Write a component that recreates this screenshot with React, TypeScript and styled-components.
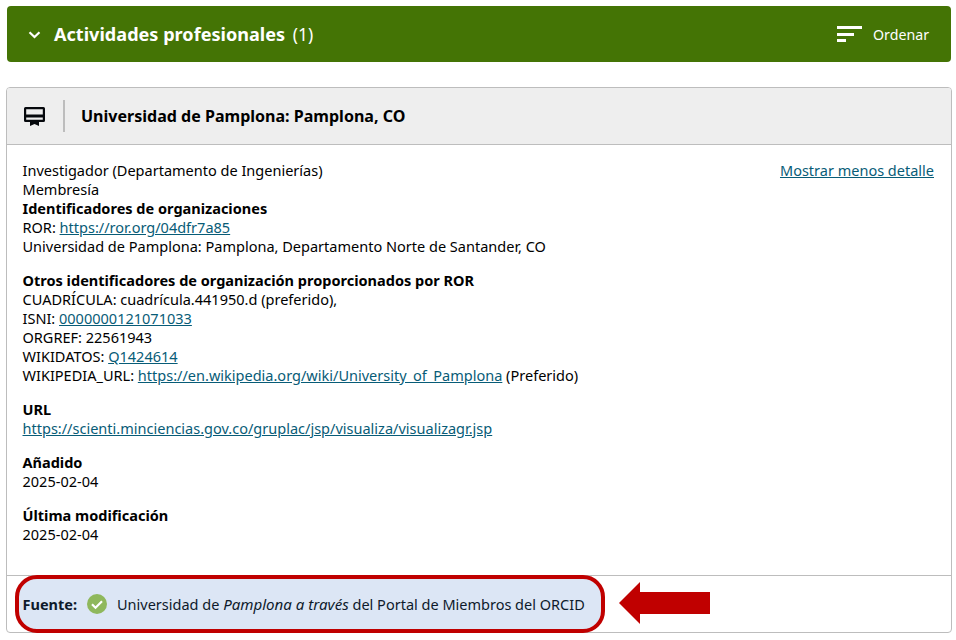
import React from "react";
import styled, { createGlobalStyle } from "styled-components";

const Global = createGlobalStyle`
  html, body { margin: 0; padding: 0; background: #fff; }
  body { font-family: "Noto Sans", "Open Sans", sans-serif; font-size: 14.53px; line-height: 19px; color: #000; }
`;
const Page = styled.div`
  width: 956px; height: 640px; overflow: hidden; box-sizing: border-box;
  padding: 6px 5px 0 7px;
  display: flex; flex-direction: column; gap: 25px;
`;
const Banner = styled.header`
  height: 56px; background: #447405; border-radius: 4px; color: #fff;
  display: flex; align-items: center; padding: 0 22px 0 20px;
`;
const Title = styled.h2`
  margin: 0 0 0 12px; font-size: 18.1px; font-weight: 700; line-height: 24px; flex: 1;
  span { font-weight: 400; font-size: 17.4px; margin-left: 3px; }
`;
const Sort = styled.div`display: flex; align-items: center; gap: 11px; font-size: 14.2px;`;
const Card = styled.section`
  position: relative; width: 946px; height: 546px; margin-left: -1px; box-sizing: border-box;
  border: 1px solid #bdbdbd; border-radius: 4px; display: flex; flex-direction: column;
`;
const CardHead = styled.div`
  height: 57px; flex: none; box-sizing: border-box; background: #eee; border-bottom: 1px solid #bdbdbd;
  border-radius: 3px 3px 0 0; display: flex; align-items: center; padding-left: 17px;
`;
const Divider = styled.div`width: 2px; height: 32px; background: #bdbdbd; margin: 0 16px 0 18px;`;
const CardTitle = styled.h3`margin: 0; font-size: 16.05px; font-weight: 700; line-height: 22px;`;
const Body = styled.div`
  flex: 1; padding: 16px 16px 0 15.5px; display: flex; flex-direction: column; gap: 15px; position: relative;
`;
const Group = styled.div`display: flex; flex-direction: column;`;
const Line = styled.div``;
const Label = styled.div`font-weight: 700;`;
const A = styled.a`color: #085c77; text-decoration: underline;`;
const Toggle = styled(A)`position: absolute; top: 16px; right: 17px; font-size: 14.5px;`;
const Foot = styled.footer`
  height: 57px; flex: none; box-sizing: border-box; border-top: 1px solid #bdbdbd;
`;
const Highlight = styled.div`
  position: absolute; left: 8px; top: 487px; width: 590px; height: 58px; box-sizing: border-box;
  background: #dce6f5; border: 4px solid #c00000; border-radius: 22px;
  display: flex; align-items: center; padding-left: 3.5px; color: #0e1a2b;
  font-size: 14.5px;
  i { font-style: italic; font-size: 15.1px; }
`;
const Fuente = styled.b`font-weight: 700; margin-right: 10px;`;
const Check = styled.svg`margin-right: 10px; flex: none;`;
const Arrow = styled.svg`position: absolute; left: 612px; top: 494px;`;

export default function App() {
  return (
    <>
      <Global />
      <Page>
        <Banner>
          <svg width="15" height="15" viewBox="0 0 15 15">
            <path d="M2.5 5.2 7.5 10l5-4.8" fill="none" stroke="#fff" strokeWidth="2.2" />
          </svg>
          <Title>Actividades profesionales <span>(1)</span></Title>
          <Sort>
            <svg width="26" height="18" viewBox="0 0 26 18">
              <path d="M1 1h25v3H1zM1 8h17v3H1zM1 14h9v3H1z" fill="#fff" />
            </svg>
            Ordenar
          </Sort>
        </Banner>
        <Card>
          <CardHead>
            <svg width="21" height="19" viewBox="0 0 21 19">
              <path d="M1.5 0h18A1.500 1.500 0 0 1 21 1.500v12a1.500 1.500 0 0 1-1.500 1.500H15v4l-4.500-2L6 19v-4H1.500A1.500 1.500 0 0 1 0 13.500v-12A1.500 1.500 0 0 1 1.500 0zM2.200 2.200v5.300h16.600V2.200zM2.200 10.500v2.300h16.600v-2.300z" fill="#05080c" fillRule="evenodd" />
            </svg>
            <Divider />
            <CardTitle>Universidad de Pamplona: Pamplona, CO</CardTitle>
          </CardHead>
          <Body>
            <Toggle href="#">Mostrar menos detalle</Toggle>
            <Group>
              <Line>Investigador (Departamento de Ingenierías)</Line>
              <Line>Membresía</Line>
              <Label>Identificadores de organizaciones</Label>
              <Line>ROR: <A href="#">https://ror.org/04dfr7a85</A></Line>
              <Line>Universidad de Pamplona: Pamplona, Departamento Norte de Santander, CO</Line>
            </Group>
            <Group>
              <Label>Otros identificadores de organización proporcionados por ROR</Label>
              <Line>CUADRÍCULA: cuadrícula.441950.d (preferido),</Line>
              <Line>ISNI: <A href="#">0000000121071033</A></Line>
              <Line>ORGREF: 22561943</Line>
              <Line>WIKIDATOS: <A href="#">Q1424614</A></Line>
              <Line>WIKIPEDIA_URL: <A href="#">https://en.wikipedia.org/wiki/University_of_Pamplona</A> (Preferido)</Line>
            </Group>
            <Group>
              <Label>URL</Label>
              <Line><A href="#">https://scienti.minciencias.gov.co/gruplac/jsp/visualiza/visualizagr.jsp</A></Line>
            </Group>
            <Group>
              <Label>Añadido</Label>
              <Line>2025-02-04</Line>
            </Group>
            <Group>
              <Label>Última modificación</Label>
              <Line>2025-02-04</Line>
            </Group>
          </Body>
          <Foot />
          <Highlight>
            <Fuente>Fuente:</Fuente>
            <Check width="20" height="20" viewBox="0 0 20 20">
              <circle cx="10" cy="10" r="10" fill="#8fb85c" />
              <path d="M5 10.200 8.500 13.700 15 7.200" fill="none" stroke="#fff" strokeWidth="2.200" />
            </Check>
            <span>Universidad de <i>Pamplona a través</i> del Portal de Miembros del ORCID</span>
          </Highlight>
          <Arrow width="92" height="44" viewBox="0 0 92 44">
            <path d="M0 21 21 0v10h70v22H21v10z" fill="#c00000" />
          </Arrow>
        </Card>
      </Page>
    </>
  );
}
